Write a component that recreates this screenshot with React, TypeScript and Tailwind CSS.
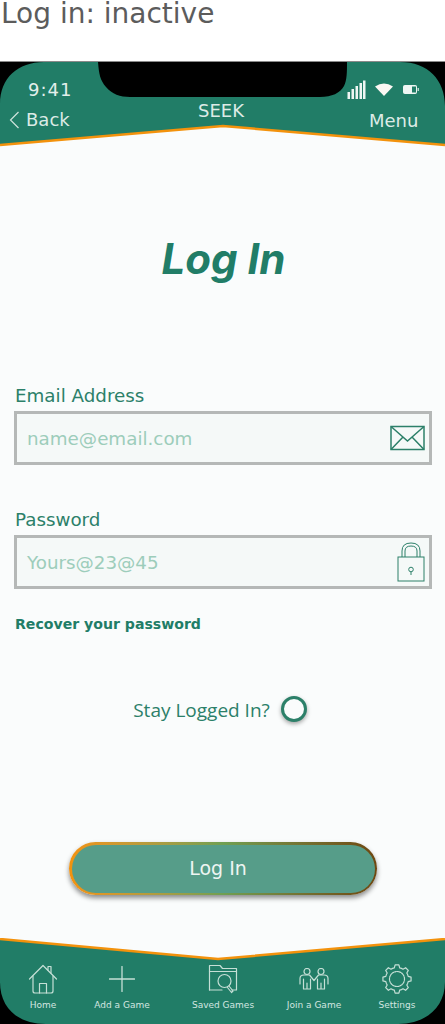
import React from "react";

const F = "font-['DejaVu_Sans',sans-serif]";

function HeaderShape() {
  return (
    <svg className="absolute inset-0 w-full h-full" viewBox="0 0 445 85" fill="none">
      <path d="M0 83 L223 64 L445 83 V85 H0 Z" fill="#fafcfc" />
      <path d="M0 83 V42 C0 16 18 0 44 0 H98 C99 12 100 18 106 25 C112 32 120 35 130 35 H320 C332 35 340 31 344 24 C347 18 347 10 347 0 H400 C428 0 445 18 445 44 V83 L223 64 Z" fill="#217d67" />
      <path d="M0 83 L223 64 L445 83" stroke="#f3920c" strokeWidth="2.500" />
    </svg>
  );
}

function FooterShape() {
  return (
    <svg className="absolute inset-0 w-full h-full" viewBox="0 0 445 86" fill="none">
      <path d="M0 0 H445 V1 L218 21 L0 1 Z" fill="#fafcfc" />
      <path d="M0 1 L218 21 L445 1 V44 C445 70 425 86 398 86 H46 C18 86 0 70 0 44 Z" fill="#217d67" />
      <path d="M0 1 L218 21 L445 1" stroke="#f3920c" strokeWidth="2.500" />
    </svg>
  );
}

const ic = { fill: "none", stroke: "#c5dfd6", strokeWidth: 1.2, strokeLinecap: "round" as const, strokeLinejoin: "round" as const };

const gearPath = (() => {
  const pts: string[] = [];
  const teeth = 8;
  for (let i = 0; i < teeth; i++) {
    const a = (i * Math.PI * 2) / teeth - Math.PI / 2;
    const step = (Math.PI * 2) / teeth;
    const ps: [number, number][] = [
      [11.5, a - step * 0.5],
      [11.5, a - step * 0.3],
      [14.2, a - step * 0.17],
      [14.2, a + step * 0.17],
      [11.5, a + step * 0.3],
    ];
    ps.forEach(([r, t]) => {
      pts.push(`${(15 + r * Math.cos(t)).toFixed(2)} ${(15 + r * Math.sin(t)).toFixed(2)}`);
    });
  }
  return `M${pts.join(" L")} Z`;
})();

function HomeIcon() {
  return (
    <svg width="30" height="30" viewBox="0 0 30 30" {...ic}>
      <path d="M1.500 15 L15 1.500 L28.500 15" />
      <path d="M20 6 V2.500 H23 V9" />
      <path d="M5 12 V27 Q5 29 7 29 H23 Q25 29 25 27 V12" />
      <path d="M11.500 29 V19.500 H18.500 V29" />
    </svg>
  );
}
function PlusIcon() {
  return (
    <svg width="26" height="26" viewBox="0 0 26 26" {...ic} strokeWidth={1.3}>
      <path d="M13 0.500 V25.500 M0.500 13 H25.500" />
    </svg>
  );
}
function FolderIcon() {
  return (
    <svg width="30" height="30" viewBox="0 0 30 30" {...ic}>
      <path d="M1.500 26 V1.500 H12 L14.500 4.500 H28.500 V26 H24" />
      <path d="M1.500 26 H14" />
      <path d="M1.500 7.500 H28.500" />
      <circle cx="16.500" cy="17" r="6.500" />
      <path d="M21 22 L25 27 L23.500 28.500 L19.500 23.500" />
    </svg>
  );
}
function PeopleIcon() {
  return (
    <svg width="30" height="22" viewBox="0 0 30 22" {...ic}>
      <circle cx="8" cy="3.500" r="3" />
      <circle cx="22" cy="3.500" r="3" />
      <path d="M1 16 V10.500 Q1 7 5 7 H10.500 L15 12.500 L19.500 7 H25 Q29 7 29 10.500 V16" />
      <path d="M4.500 11 V21 H11.500 V11 M8 15 V21 M18.500 11 V21 H25.500 V11 M22 15 V21" />
    </svg>
  );
}
function GearIcon() {
  return (
    <svg width="30" height="30" viewBox="0 0 30 30" {...ic}>
      <path d={gearPath} />
      <circle cx="15" cy="15" r="7.500" strokeDasharray="1.500 1" />
    </svg>
  );
}

function FooterItem({ icon, label, x }: { icon: React.ReactNode; label: string; x: string }) {
  return (
    <div className={`flex flex-col items-center ${x}`}>
      <div className="h-[30px] flex items-center justify-center">{icon}</div>
      <span className={`mt-[5px] text-[9px] leading-[12px] text-[#d3e6e0] whitespace-nowrap ${F}`}>{label}</span>
    </div>
  );
}

function Field({ label, value, icon, mt }: { label: string; value: string; icon: React.ReactNode; mt: string }) {
  return (
    <div className={`${mt} flex flex-col`}>
      <span className={`ml-[15px] text-[18.300px] leading-[24px] text-[#2c8069] ${F}`}>{label}</span>
      <div className="mt-[3px] ml-[14px] w-[418px] h-[54px] border-[3px] border-[#b5b8b7] bg-[#f5f9f8] flex items-center justify-between pl-[10px] pr-[4px]">
        <span className={`pt-[2px] text-[18.300px] text-[#9dcdbb] ${F}`}>{value}</span>
        {icon}
      </div>
    </div>
  );
}

export default function App() {
  return (
    <div className={`w-[445px] h-[1024px] bg-white flex flex-col overflow-hidden ${F}`}>
      <div className="h-[61px] text-[28px] leading-[28px] text-[#5c5c5c] pl-[1px]">Log in: inactive</div>
      <div className="h-[1px] bg-[#8a8a8a]" />
      <div className="flex-1 bg-black flex flex-col">
        <header className="relative h-[85px] bg-black shrink-0">
          <HeaderShape />
          <span className="absolute left-[28px] top-[17px] text-[18px] leading-[22px] tracking-[1px] text-[#e3efeb]">9:41</span>
          <svg className="absolute left-[347px] top-[18px]" width="19" height="19" viewBox="0 0 19 19" fill="#eef6f3">
            <rect x="0.500" y="12" width="2.500" height="7" />
            <rect x="4.500" y="9" width="2.500" height="10" />
            <rect x="8.500" y="6" width="2.500" height="13" />
            <rect x="12.500" y="3" width="2.500" height="16" />
            <rect x="16" y="0.500" width="2.500" height="18.500" />
          </svg>
          <svg className="absolute left-[375px] top-[21px]" width="18" height="13" viewBox="0 0 18 13" fill="#fbf7f3">
            <path d="M0 3.500 Q9 -2.500 18 3.500 L9 13 Z" />
          </svg>
          <svg className="absolute left-[403px] top-[23px]" width="16" height="9" viewBox="0 0 16 9" fill="none">
            <rect x="0.500" y="0.500" width="13" height="8" rx="1" fill="#eef6f3" stroke="#eef6f3" />
            <rect x="9" y="1.500" width="4" height="6" fill="#217d67" />
            <rect x="14.500" y="3" width="1.500" height="3" fill="#b9d9cf" />
          </svg>
          <svg className="absolute left-[9px] top-[49px]" width="11" height="18" viewBox="0 0 11 18" fill="none" stroke="#cfe3dc" strokeWidth="1.200">
            <path d="M9.500 1 L1.500 9 L9.500 17" />
          </svg>
          <span className="absolute left-[26px] top-[47px] text-[18px] leading-[22px] text-[#dcebe6]">Back</span>
          <span className="absolute left-[198px] top-[38px] text-[18px] leading-[22px] text-[#dcebe6]">SEEK</span>
          <span className="absolute left-[369px] top-[48px] text-[18px] leading-[22px] text-[#dcebe6]">Menu</span>
        </header>
        <main className="flex-1 bg-[#fafcfc] flex flex-col">
          <h1 className="mt-[84px] pl-[2px] text-center text-[42px] leading-[56px] font-bold italic text-[#217d67] font-['Inter',sans-serif]">Log In</h1>
          <Field
            mt="mt-[97px]"
            label="Email Address"
            value="name@email.com"
            icon={
              <svg width="35" height="26" viewBox="0 0 35 26" fill="none" stroke="#2c8069" strokeWidth="1.500">
                <rect x="1" y="1.500" width="33" height="23" />
                <path d="M1 1.500 L17.500 16 L34 1.500 M1 24.500 L13 12 M34 24.500 L22 12" />
              </svg>
            }
          />
          <Field
            mt="mt-[43px]"
            label="Password"
            value="Yours@23@45"
            icon={
              <svg width="28" height="40" viewBox="0 0 28 40" fill="none" stroke="#2c8069" strokeWidth="1">
                <rect x="1" y="15" width="26" height="24" />
                <path d="M5 15 V9 Q5 1 14 1 Q23 1 23 9 V15 M8 15 V9 Q8 4 14 4 Q20 4 20 9 V15" />
                <circle cx="14" cy="27.500" r="2.300" />
                <path d="M14 30 V33" />
              </svg>
            }
          />
          <span className="mt-[26px] ml-[15px] text-[14.100px] leading-[18px] font-bold text-[#217d67]">Recover your password</span>
          <div className="mt-[63px] flex items-center justify-center pr-[5px] gap-[11px]">
            <span className="text-[19px] leading-[24px] text-[#2c8069] font-['Open_Sans',sans-serif] relative top-[1px]">Stay Logged In?</span>
            <span className="w-[26px] h-[26px] rounded-full border-[3px] border-[#2c8069] bg-[#fafcfc] shadow-[0_2px_4px_rgba(0,0,0,0.35)]" />
          </div>
          <div className="mt-[120px] ml-[69px] w-[308px] h-[53px] p-[2.500px] rounded-full bg-linear-to-r from-[#f3920c] via-[#6f9f52] to-[#6e4710] shadow-[0_3px_5px_rgba(0,0,0,0.45)]">
            <button className="w-full h-full rounded-full bg-[#569d89] text-[19px] text-[#eef5f2] flex items-center justify-center pr-[10px]">Log In</button>
          </div>
        </main>
        <footer className="relative h-[86px] bg-black shrink-0">
          <FooterShape />
          <div className="absolute inset-0 pt-[26px]">
            <div className="flex">
              <FooterItem x="ml-[28px] w-[30px]" icon={<HomeIcon />} label="Home" />
              <FooterItem x="ml-[51px] w-[26px]" icon={<PlusIcon />} label="Add a Game" />
              <FooterItem x="ml-[73px] w-[30px]" icon={<FolderIcon />} label="Saved Games" />
              <FooterItem x="ml-[61px] w-[30px]" icon={<PeopleIcon />} label="Join a Game" />
              <FooterItem x="ml-[53px] w-[30px]" icon={<GearIcon />} label="Settings" />
            </div>
          </div>
        </footer>
      </div>
    </div>
  );
}
